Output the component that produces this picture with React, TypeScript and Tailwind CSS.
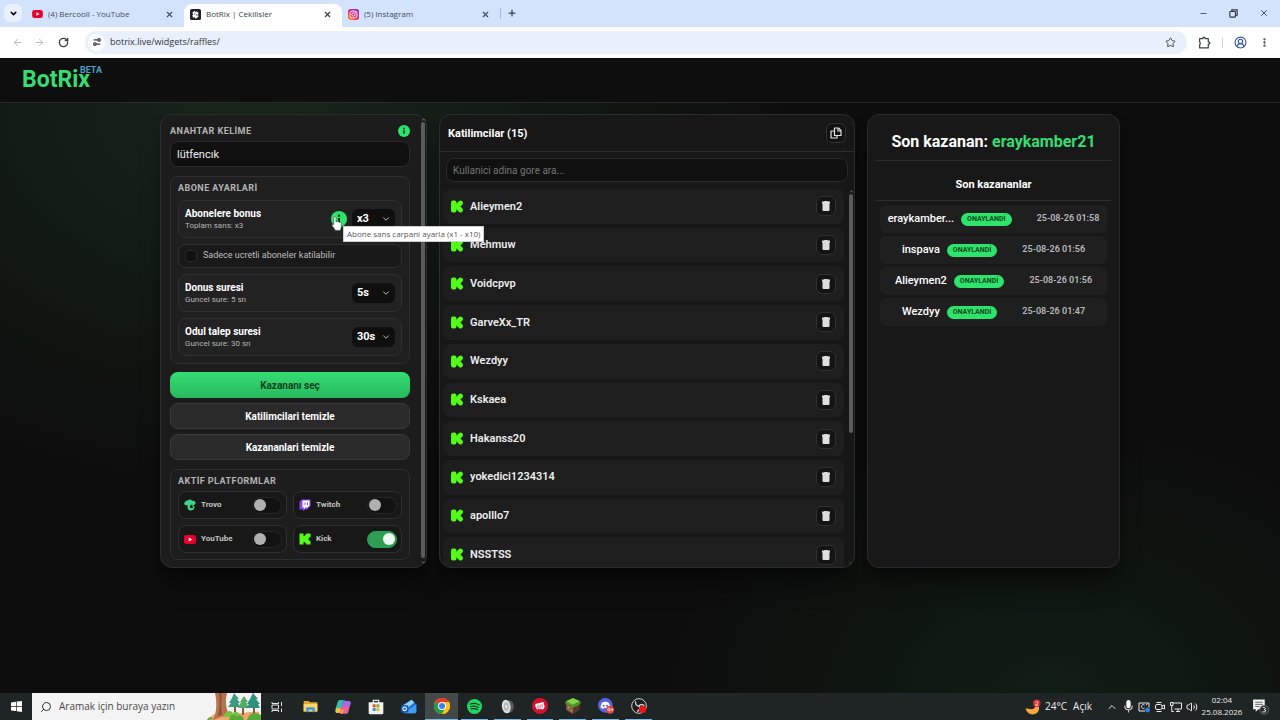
import { useState, type ReactNode } from "react";
import {
  ArrowLeft,
  ArrowRight,
  ChevronDown,
  ChevronUp,
  CircleUserRound,
  EllipsisVertical,
  Minus,
  Plus,
  RotateCw,
  Search,
  Settings2,
  Star,
  Volume2,
  X,
} from "lucide-react";

const participants = [
  "Alieymen2",
  "Mehmuw",
  "Voidcpvp",
  "GarveXx_TR",
  "Wezdyy",
  "Kskaea",
  "Hakanss20",
  "yokedici1234314",
  "apolllo7",
  "NSSTSS",
];

const winners = [
  { name: "eraykamber...", date: "25-08-26 01:58" },
  { name: "inspava", date: "25-08-26 01:56" },
  { name: "Alieymen2", date: "25-08-26 01:56" },
  { name: "Wezdyy", date: "25-08-26 01:47" },
];

/* ---------- icons ---------- */

function YoutubeIcon({ className }: { className?: string }) {
  return (
    <svg viewBox="0 0 24 18" className={className}>
      <rect width="24" height="18" rx="5" fill="#e8002d" />
      <path d="M9.500 5v8l7-4z" fill="#fff" />
    </svg>
  );
}

function BotrixIcon() {
  return (
    <svg viewBox="0 0 24 24" className="size-[11px]">
      <rect width="24" height="24" rx="4" fill="#20232b" />
      <path d="M5 8l5-4 2 3 3-2 4 5-2 2 2 4-6 5-3-3-3 1-2-5 2-2z" fill="#fff" />
      <path d="M9 9l3 1-1 3zM13 13l3-2v4z" fill="#20232b" />
    </svg>
  );
}

function InstagramIcon() {
  return (
    <svg viewBox="0 0 24 24" className="size-[11px]">
      <defs>
        <linearGradient id="ig" x1="0" y1="1" x2="0.8" y2="0">
          <stop offset="0" stopColor="#fdb813" />
          <stop offset="0.4" stopColor="#f5304f" />
          <stop offset="0.7" stopColor="#d6249f" />
          <stop offset="1" stopColor="#7a2be0" />
        </linearGradient>
      </defs>
      <rect width="24" height="24" rx="6" fill="url(#ig)" />
      <rect x="4.5" y="4.5" width="15" height="15" rx="4.5" fill="none" stroke="#fff" strokeWidth="2" />
      <circle cx="12" cy="12" r="3.5" fill="none" stroke="#fff" strokeWidth="2" />
      <circle cx="16.4" cy="7.6" r="1.1" fill="#fff" />
    </svg>
  );
}

function ExtensionIcon() {
  return (
    <svg viewBox="0 0 24 24" className="size-[13px]" fill="none" stroke="currentColor" strokeWidth="2.2">
      <path d="M3 5h6V4a2 2 0 0 1 4 0v1h6v6h1a2 2 0 0 1 0 4h-1v7H3v-6a3 3 0 0 0 0-5z" strokeLinejoin="round" />
    </svg>
  );
}

function CopyIcon() {
  return (
    <svg viewBox="0 0 24 24" className="size-3" fill="none" stroke="currentColor" strokeWidth="2.4">
      <path d="M9 2h8l5 5v10H9z" strokeLinejoin="round" />
      <path d="M16 2v6h6" />
      <path d="M9 8H2v14h12v-5" strokeLinejoin="round" />
    </svg>
  );
}

function KickBadge() {
  return (
    <svg viewBox="0 0 24 26" className="h-[13px] w-3 shrink-0">
      <rect x="0" y="1" width="11" height="24" rx="4" fill="#53fc18" />
      <path
        d="M19 6l-7 7 7 7"
        fill="none"
        stroke="#53fc18"
        strokeWidth="9.500"
        strokeLinecap="round"
        strokeLinejoin="round"
      />
    </svg>
  );
}

function KickIcon() {
  return (
    <svg viewBox="0 0 24 24" className="size-3">
      <path
        d="M1 1h8v5h3V3.500h2.500V1H23v7.500h-2.500V11H18v2h2.500v2.500H23V23h-8.500v-2.500H12V18H9v5H1z"
        fill="#53fc18"
      />
    </svg>
  );
}

function TrovoIcon() {
  return (
    <svg viewBox="0 0 24 24" className="size-3">
      <path
        d="M1 7c2-1 2-5 6-4 3-3 8-3 9 1 4-1 7 1 7 4s-2 4-5 4c-3-1-5 0-6 2-1 3 1 5 4 4 2 0 3-2 2-3h-2v-2c3-1 5 1 5 3 0 4-3 7-8 7-4 0-6-3-6-7v-4c-4 2-8-1-6-5z"
        fill="#3fd189"
      />
    </svg>
  );
}

function TwitchIcon() {
  return (
    <svg viewBox="0 0 24 24" className="size-3">
      <path d="M1 6l5-5h17v13l-7 7h-4l-4 3v-3H1z" fill="#8b44f0" />
      <path d="M7 3h14v10l-4 4h-4l-3 3v-3H7z" fill="#fff" />
      <path d="M12 7v5M17 7v5" stroke="#8b44f0" strokeWidth="2" />
    </svg>
  );
}

function TrashIcon() {
  return (
    <svg viewBox="0 0 16 20" className="h-[10px] w-2" fill="#dedede">
      <path d="M5 0h6l1 1h4v4h-1v13a2 2 0 0 1-2 2H3a2 2 0 0 1-2-2V5H0V1h4z" />
    </svg>
  );
}

function InfoIcon({ className }: { className?: string }) {
  return (
    <svg viewBox="0 0 24 24" className={className}>
      <circle cx="12" cy="12" r="12" fill="#2ee36c" />
      <path d="M12 10.500v7" stroke="#0d3a1c" strokeWidth="3" />
      <circle cx="12" cy="7" r="1.800" fill="#0d3a1c" />
    </svg>
  );
}

function HandCursor() {
  return (
    <svg viewBox="0 0 20 28" className="absolute top-[5px] left-0 z-20 h-[15px] w-[11px]">
      <path
        d="M5 3c0-3 4-3 4 0v8c1-2 3-1 3 0 1-1 3-1 3 1 2-1 4 0 4 2v5c0 3-1 5-2 8H8c-1-3-4-5-6-9-1-2 1-4 3-2z"
        fill="#fff"
        stroke="#333"
        strokeWidth="1"
      />
    </svg>
  );
}

/* ---------- browser ---------- */

type TabProps = { icon: ReactNode; title: string; active?: boolean };

function BrowserTab({ icon, title, active }: TabProps) {
  return (
    <div
      className={
        active
          ? "flex h-[23px] w-[158px] items-center rounded-t-lg bg-white pr-[10px] pb-[3px] pl-[6px] text-[#3a3d42]"
          : "flex h-[23px] w-[158px] items-center pr-[10px] pb-[3px] pl-[6px] text-[#454c57]"
      }
    >
      {icon}
      <span className="ml-[5px] flex-1 truncate text-[8px]">{title}</span>
      <button type="button" aria-label="Sekmeyi kapat">
        <X className="size-[9px]" strokeWidth={3} />
      </button>
    </div>
  );
}

function BrowserChrome() {
  return (
    <div className="font-['Open_Sans','Noto_Sans',sans-serif]">
      <div className="flex h-[27px] items-end bg-[#d3e3fb] pl-1">
        <button
          type="button"
          aria-label="Sekme ara"
          className="mr-1 mb-[5px] flex size-[18px] items-center justify-center rounded-md bg-[#e9f1fe]"
        >
          <ChevronDown className="size-[9px]" strokeWidth={4} />
        </button>
        <BrowserTab icon={<YoutubeIcon className="h-2 w-[11px]" />} title="(4) Bercooll - YouTube" />
        <BrowserTab icon={<BotrixIcon />} title="BotRix | Cekilisler" active />
        <BrowserTab icon={<InstagramIcon />} title="(5) Instagram" />
        <div className="mb-2 h-[11px] w-px bg-[#a5bbdc]" />
        <button type="button" aria-label="Yeni sekme" className="mb-[9px] ml-[6px] text-[#3c4350]">
          <Plus className="size-[10px]" strokeWidth={3} />
        </button>
        <div className="mb-[9px] ml-auto flex items-center gap-[21px] pr-[11px] text-[#30343b]">
          <Minus className="size-[9px]" />
          <svg viewBox="0 0 16 16" className="size-[9px]" fill="none" stroke="currentColor" strokeWidth="2">
            <rect x="1.500" y="4.500" width="10" height="10" rx="1" />
            <path d="M5 4V1.500h9.500V11H12" />
          </svg>
          <X className="size-[10px]" />
        </div>
      </div>
      <div className="flex h-[31px] items-center bg-white pr-[10px] pb-px pl-3 text-[#3c4043]">
        <ArrowLeft className="size-[11px] text-[#b4b6ba]" />
        <ArrowRight className="ml-[11px] size-[11px] text-[#b4b6ba]" />
        <RotateCw className="ml-[13px] size-[11px]" strokeWidth={3} />
        <div className="ml-4 flex h-[23px] flex-1 items-center rounded-full bg-[#e9f0fb] pr-[11px] pl-[3px]">
          <div className="flex size-[17px] items-center justify-center rounded-full bg-white">
            <Settings2 className="size-[10px] -scale-x-100" strokeWidth={3} />
          </div>
          <input
            type="text"
            aria-label="Adres"
            defaultValue="botrix.live/widgets/raffles/"
            className="ml-[5px] flex-1 bg-transparent text-[9px] text-[#2f3338] outline-none"
          />
          <Star className="size-[11px]" strokeWidth={2} />
        </div>
        <div className="ml-[11px]">
          <ExtensionIcon />
        </div>
        <div className="mx-[11px] h-[11px] w-px bg-[#ccd8ea]" />
        <CircleUserRound className="size-[13px] text-[#3453a8]" strokeWidth={2} />
        <EllipsisVertical className="ml-3 size-[11px]" strokeWidth={3} />
      </div>
    </div>
  );
}

/* ---------- left column ---------- */

function DarkSelect({ id, value }: { id: string; value: string }) {
  return (
    <div className="relative">
      <select
        id={id}
        defaultValue={value}
        className="block h-5 w-[43px] appearance-none rounded-md bg-[#0f0f0f] pl-[5px] text-[11px] font-bold text-white"
      >
        <option>{value}</option>
      </select>
      <ChevronDown
        className="pointer-events-none absolute top-[5px] right-1 size-[10px] text-[#dddddd]"
        strokeWidth={2}
      />
    </div>
  );
}

type SettingRowProps = { id: string; title: string; hint: string; value: string; children?: ReactNode };

function SettingRow({ id, title, hint, value, children }: SettingRowProps) {
  return (
    <div className="flex h-[38px] items-center rounded-lg border border-[#303030] bg-[#222222] px-[6px]">
      <label htmlFor={id} className="flex-1">
        <span className="block text-[10px] leading-[13px] font-bold text-white">{title}</span>
        <span className="block text-[8px] leading-3 text-[#b5b5b5]">{hint}</span>
      </label>
      {children}
      <DarkSelect id={id} value={value} />
    </div>
  );
}

function BonusInfo() {
  return (
    <div className="relative mr-[5px]">
      <InfoIcon className="size-4" />
      <HandCursor />
      <div
        role="tooltip"
        className="absolute top-[15px] left-3 z-10 border border-[#cfcfcf] bg-white px-[3px] font-['Open_Sans','Noto_Sans',sans-serif] text-[8px] leading-[14px] whitespace-nowrap text-[#575757]"
      >
        Abone sans carpani ayarla (x1 - x10)
      </div>
    </div>
  );
}

function PlatformToggle({ name, icon, on }: { name: string; icon: ReactNode; on?: boolean }) {
  const [checked, setChecked] = useState(!!on);
  return (
    <label className="relative flex h-7 items-center rounded-lg border border-[#303030] bg-[#181818] pr-1 pl-[5px]">
      {icon}
      <span className="ml-[5px] flex-1 text-[8px] font-bold text-[#c4c4c4]">{name}</span>
      <input type="checkbox" className="peer sr-only" checked={checked} onChange={() => setChecked(!checked)} />
      <span className="flex h-[17px] w-[30px] items-center rounded-full border border-[#272727] bg-[#121212] px-px peer-checked:justify-end peer-checked:border-[#2f9e55] peer-checked:bg-[#2f9e55]">
        <span className={checked ? "size-3 rounded-full bg-[#eafaf0]" : "size-3 rounded-full bg-[#b0b0b0]"} />
      </span>
    </label>
  );
}

function SectionLabel({ children }: { children: ReactNode }) {
  return <h2 className="text-[9px] leading-[11px] font-bold tracking-wider text-[#b4b4b4]">{children}</h2>;
}

function SettingsPanel() {
  return (
    <section className="flex rounded-xl border border-[#2b2f2c] bg-[#1c1c1c] pl-[9px] shadow-xl shadow-black/40">
      <div className="flex-1 pt-[9px] pb-[7px]">
        <div className="flex h-[14px] items-center justify-between">
          <label htmlFor="keyword" className="pt-px text-[9px] font-bold tracking-wider text-[#b4b4b4]">
            ANAHTAR KELİME
          </label>
          <InfoIcon className="size-3" />
        </div>
        <input
          id="keyword"
          type="text"
          defaultValue="lütfencık"
          className="mt-[3px] block h-[26px] w-full rounded-lg border border-[#2a2a2a] bg-[#101010] px-[6px] text-[11px] text-[#eeeeee]"
        />

        <div className="mt-[9px] rounded-lg border border-[#303030] bg-[#1f1f1f] px-[7px] pt-[6px] pb-[7px]">
          <SectionLabel>ABONE AYARLARİ</SectionLabel>
          <div className="mt-[6px] space-y-[6px]">
            <SettingRow id="bonus" title="Abonelere bonus" hint="Toplam sans: x3" value="x3">
              <BonusInfo />
            </SettingRow>
            <label className="flex h-6 items-center gap-[6px] rounded-lg border border-[#303030] bg-[#191919] px-[6px] text-[9px] text-[#bdbdbd]">
              <input
                type="checkbox"
                className="size-3 appearance-none rounded-sm border border-[#2a2a2a] bg-[#101010] checked:bg-[#2ee36c]"
              />
              Sadece ucretli aboneler katilabilir
            </label>
            <SettingRow id="spin" title="Donus suresi" hint="Guncel sure: 5 sn" value="5s" />
            <SettingRow id="claim" title="Odul talep suresi" hint="Guncel sure: 30 sn" value="30s" />
          </div>
        </div>

        <div className="mt-2 space-y-[5px] text-[10px] font-bold">
          <button
            type="button"
            className="block h-[26px] w-full rounded-lg bg-linear-to-b from-[#35dd75] to-[#27b95c] pt-px text-[#07411c]"
          >
            Kazananı seç
          </button>
          <button type="button" className="block h-[26px] w-full rounded-lg border border-[#3a3a3a] bg-[#2a2a2a] text-white">
            Katilimcilari temizle
          </button>
          <button type="button" className="block h-[26px] w-full rounded-lg border border-[#3a3a3a] bg-[#2a2a2a] text-white">
            Kazananlari temizle
          </button>
        </div>

        <div className="mt-[9px] rounded-lg border border-[#303030] bg-[#1d1d1d] px-[7px] pt-[6px] pb-[6px]">
          <SectionLabel>AKTİF PLATFORMLAR</SectionLabel>
          <div className="mt-1 grid grid-cols-2 gap-[6px]">
            <PlatformToggle name="Trovo" icon={<TrovoIcon />} />
            <PlatformToggle name="Twitch" icon={<TwitchIcon />} />
            <PlatformToggle name="YouTube" icon={<YoutubeIcon className="h-[9px] w-3" />} />
            <PlatformToggle name="Kick" icon={<KickIcon />} on />
          </div>
        </div>
      </div>
      <div className="ml-[10px] flex w-[6px] flex-col items-center">
        <ChevronUp className="mt-[2px] size-[5px] text-[#8a8a8a]" strokeWidth={4} />
        <div className="w-1 flex-1 rounded-full bg-[#5c5c5c]" />
        <ChevronDown className="my-[2px] size-[5px] text-[#8a8a8a]" strokeWidth={4} />
      </div>
    </section>
  );
}

/* ---------- middle column ---------- */

function ParticipantsPanel() {
  return (
    <section className="flex flex-col overflow-hidden rounded-xl border border-[#2b2f2c] bg-[#171717] shadow-xl shadow-black/40 contain-size">
      <div className="flex h-[37px] shrink-0 items-center justify-between border-b border-[#2b2f2c] px-2">
        <h2 className="pt-[2px] text-[11px] font-bold text-white">Katilimcilar (15)</h2>
        <button
          type="button"
          aria-label="Kopyala"
          className="flex size-5 items-center justify-center rounded-md border border-[#333333] bg-[#121212] text-[#e2e2e2]"
        >
          <CopyIcon />
        </button>
      </div>
      <div className="px-[6px] pt-[6px] pb-[7px]">
        <input
          type="text"
          aria-label="Katilimci ara"
          placeholder="Kullanici adina gore ara..."
          className="block h-6 w-full rounded-lg border border-[#2a2a2a] bg-[#101010] px-[6px] text-[10px] text-white placeholder:text-[#747474]"
        />
      </div>
      <div className="flex min-h-0 flex-1">
        <ul className="grid h-[383px] flex-1 auto-rows-fr gap-1 pl-[3px]">
          {participants.map((name) => (
            <li key={name} className="flex items-center rounded-lg bg-[#1e1e1e] px-2">
              <KickBadge />
              <span className="ml-[7px] flex-1 pt-px text-[11px] font-semibold text-[#ededed]">{name}</span>
              <button
                type="button"
                aria-label={`${name} sil`}
                className="flex size-5 items-center justify-center rounded-md border border-[#303030] bg-[#141414]"
              >
                <TrashIcon />
              </button>
            </li>
          ))}
        </ul>
        <div className="ml-1 flex w-[6px] flex-col items-center">
          <ChevronUp className="size-[5px] text-[#8a8a8a]" strokeWidth={4} />
          <div className="flex w-full flex-1 justify-center">
            <div className="h-[65%] w-1 rounded-full bg-[#5c5c5c]" />
          </div>
          <ChevronDown className="mb-px size-[5px] text-[#8a8a8a]" strokeWidth={4} />
        </div>
      </div>
    </section>
  );
}

/* ---------- right column ---------- */

function WinnersPanel() {
  return (
    <section className="rounded-xl border border-[#2b2b2b] bg-[#181818] px-2 shadow-xl shadow-black/40">
      <h2 className="border-b border-[#2e2e2e] pt-[17px] pb-2 text-center text-[16px] leading-5 font-bold text-white">
        Son kazanan: <span className="text-[#35dd75]">eraykamber21</span>
      </h2>
      <h3 className="border-b border-[#2e2e2e] pt-4 pb-[7px] text-center text-[11px] leading-4 font-bold text-white">
        Son kazananlar
      </h3>
      <ul className="mx-1 mt-1 space-y-[3px]">
        {winners.map((w) => (
          <li key={w.name} className="flex h-7 items-center justify-center rounded-md bg-[#1f1f1f]">
            <span className="text-[11px] font-medium text-white">{w.name}</span>
            <span className="ml-[7px] rounded-full bg-[#2ee36c] px-[6px] text-[7px] leading-[13px] font-bold text-[#0b4a20]">
              ONAYLANDİ
            </span>
            <span className="ml-[25px] text-[9px] font-semibold text-[#b8b8b8]">{w.date}</span>
          </li>
        ))}
      </ul>
    </section>
  );
}

/* ---------- taskbar ---------- */

function ForestArt() {
  return (
    <svg viewBox="0 0 54 27" className="h-[27px] w-[54px]">
      <path d="M0 27c8-8 16-9 24-7s20-2 28-1v8z" fill="#f0a76b" />
      <path d="M8 0h12c-2 8-1 16 2 21l-16 6c4-8 4-18 2-27z" fill="#b5744f" />
      <path d="M12 0h3c-1 9-1 16 0 22l-4 1c2-8 2-16 1-23z" fill="#8e5236" />
      <path d="M28 12v10M36 13v9M47 12v11" stroke="#8a5a35" strokeWidth="2" />
      <path d="M27 0l5 6h-2l3 4h-2l2 4H21l3-4h-2l3-5z" fill="#3b9b82" />
      <path d="M37 3l4 6h-2l3 6H31l3-6h-1z" fill="#55ab63" />
      <path d="M46 0l5 6h-2l4 5h-2l2 4H39l3-4h-2l3-5z" fill="#2f8f80" />
      <path d="M16 24c3-6 7-8 10-4 3-3 7 0 8 4z" fill="#7cc043" />
      <path d="M22 27c1-5 5-7 8-3 3-3 6-1 7 3zM0 27c1-3 4-4 6-1zM40 27c2-7 8-9 14-5v5z" fill="#58a83a" />
    </svg>
  );
}

function FolderIcon() {
  return (
    <svg viewBox="0 0 24 20" className="h-[13px] w-[15px]">
      <path d="M1 2a1 1 0 0 1 1-1h7l2 2h11a1 1 0 0 1 1 1v14H1z" fill="#e0a92e" />
      <path d="M1 6h22v12H1z" fill="#fcd667" />
      <path d="M5 19v-6a2 2 0 0 1 2-2h10a2 2 0 0 1 2 2v6h-4v-4H9v4z" fill="#3f9be0" />
    </svg>
  );
}

function CopilotIcon() {
  return (
    <svg viewBox="0 0 24 24" className="size-4">
      <path d="M7 2h7c2 0 3 1 3 3l-4 12c-1 3-2 4-4 4H4c-3 0-4-2-3-5L4 5c1-2 1-3 3-3z" fill="#2a8fe0" />
      <path d="M7 2h6c-2 1-2 3-3 6l-2 7H1l3-10c1-2 1-3 3-3z" fill="#34c3a0" />
      <path d="M1 14h8l-1 5c-1 1-2 2-4 2-3 0-4-2-3-5z" fill="#f2c53a" />
      <path d="M17 22h-7c-2 0-3-1-3-3l4-12c1-3 2-4 4-4h5c3 0 4 2 3 5l-3 11c-1 2-1 3-3 3z" fill="#e3629c" />
      <path d="M11 7c1-3 2-4 4-4h5c3 0 4 2 3 5l-1 3H10z" fill="#a46ae6" />
      <path d="M8 16h6c-1 3-2 5-4 6-2 0-3-1-3-3z" fill="#f59b3c" />
    </svg>
  );
}

function StoreIcon() {
  return (
    <svg viewBox="0 0 24 24" className="size-4">
      <path d="M8 6V2h8v4" fill="none" stroke="#e8e8e8" strokeWidth="2" />
      <path d="M1 5h22v16a2 2 0 0 1-2 2H3a2 2 0 0 1-2-2z" fill="#f2f2f2" />
      <path d="M7 8h4.500v4.500H7z" fill="#e5512f" />
      <path d="M12.500 8H17v4.500h-4.500z" fill="#7db32c" />
      <path d="M7 13.500h4.500V18H7z" fill="#1b9de2" />
      <path d="M12.500 13.500H17V18h-4.500z" fill="#f5b51d" />
    </svg>
  );
}

function OutlookIcon() {
  return (
    <svg viewBox="0 0 24 22" className="h-[15px] w-4">
      <path d="M3 8L16 1l7 7v11a2 2 0 0 1-2 2H5a2 2 0 0 1-2-2z" fill="#1e6fd0" />
      <path d="M4 9L16 1l4 4-11 9z" fill="#8fd3fb" />
      <path d="M6 19L23 8v11a2 2 0 0 1-2 2H7z" fill="#3fa0f0" />
      <rect y="9" width="11" height="11" rx="2" fill="#1259ad" />
      <circle cx="5.500" cy="14.500" r="2.700" fill="none" stroke="#fff" strokeWidth="1.600" />
    </svg>
  );
}

function ChromeIcon() {
  return (
    <svg viewBox="0 0 24 24" className="size-4">
      <circle cx="12" cy="12" r="12" fill="#fbc116" />
      <path d="M12 12L1.600 6A12 12 0 0 1 22.400 6z" fill="#e33b2e" />
      <path d="M12 12L1.600 6A12 12 0 0 0 12 24l5-9z" fill="#229a4c" />
      <path d="M12 12V6h10.400A12 12 0 0 1 12 24l5-9z" fill="#fbc116" />
      <circle cx="12" cy="12" r="6" fill="#fff" />
      <circle cx="12" cy="12" r="4.500" fill="#3b7ded" />
    </svg>
  );
}

function SpotifyIcon() {
  return (
    <svg viewBox="0 0 24 24" className="size-[15px]">
      <circle cx="12" cy="12" r="12" fill="#1ed760" />
      <path
        d="M5 8c5-1.500 10-1 14.500 1.500M6 12c4-1.200 8.500-.8 12 1.500M6.500 15.800c3.500-1 7-.6 10 1.200"
        fill="none"
        stroke="#12351f"
        strokeWidth="2"
        strokeLinecap="round"
      />
    </svg>
  );
}

function SpeakerIcon() {
  return (
    <svg viewBox="0 0 24 24" className="size-[15px]">
      <ellipse cx="15" cy="12" rx="7" ry="10" fill="#5a5a5a" />
      <ellipse cx="10" cy="12" rx="7" ry="11" fill="#dcdcdc" transform="rotate(-8 10 12)" />
      <ellipse cx="10" cy="12" rx="4" ry="7" fill="#b9b9b9" />
      <ellipse cx="10" cy="12" rx="1.500" ry="3" fill="#eeeeee" />
    </svg>
  );
}

function RiotIcon() {
  return (
    <svg viewBox="0 0 24 24" className="size-4">
      <circle cx="12" cy="12" r="12" fill="#d1132f" />
      <path d="M5 9l12-3 2 7-2 4h-3l-1-3v3h-3l-1-3v3H7l-1-4-1 1z" fill="#fff" />
      <path d="M9 10v5M12 10v5M15 9v5" stroke="#d1132f" />
    </svg>
  );
}

function MinecraftIcon() {
  return (
    <svg viewBox="0 0 24 24" className="size-4">
      <path d="M12 0l11 5-11 6L1 5z" fill="#7ed348" />
      <path d="M1 5l11 6v13L2 18z" fill="#8a5a3c" />
      <path d="M23 5l-11 6v13l10-6z" fill="#54382a" />
      <path d="M1 5l11 6v4l-3-1v-2l-3 1v-3l-5-1zM23 5l-11 6v4l4-3v2l3-3 4-2z" fill="#4d9a2c" />
      <path d="M4 13h3v3H4zM8 18h3v2H8z" fill="#c58a68" />
    </svg>
  );
}

function DiscordIcon() {
  return (
    <svg viewBox="0 0 24 24" className="size-4">
      <circle cx="11" cy="11" r="11" fill="#5562e8" />
      <path
        d="M6 7c3-2 7-2 10 0 2 3 2 5 2 8-1 1-3 1-4 1l-1-1H9l-1 1c-1 0-3 0-4-1 0-3 0-5 2-8z"
        fill="#fff"
      />
      <circle cx="8.500" cy="11.500" r="1.500" fill="#5562e8" />
      <circle cx="13.500" cy="11.500" r="1.500" fill="#5562e8" />
      <circle cx="18" cy="17.500" r="6" fill="#dc4747" />
      <circle cx="16" cy="17" r="1.500" fill="none" stroke="#fff" />
      <path d="M17.500 17v3M19 17.500h4M21 15.500v4" stroke="#fff" />
    </svg>
  );
}

function ObsIcon() {
  return (
    <svg viewBox="0 0 24 24" className="size-4">
      <circle cx="12" cy="12" r="11" fill="#1d1d1f" stroke="#d2d2d2" strokeWidth="1.500" />
      <path
        d="M12 12c-4 0-6-3-5-7M12 12c2-3 6-3 8 0M12 12c2 3 1 7-3 8"
        fill="none"
        stroke="#d2d2d2"
        strokeWidth="2"
      />
      <circle cx="17.500" cy="17" r="5.500" fill="#f01414" />
    </svg>
  );
}

function TaskViewIcon() {
  return (
    <svg viewBox="0 0 24 24" className="size-3" fill="none" stroke="#e4e4e4" strokeWidth="2">
      <path d="M2 2v3h13V2M2 22v-3h13v3M2 8h13v8H2zM21 2v8M21 15v7" />
    </svg>
  );
}

const apps = [
  { name: "Gorev gorunumu", icon: <TaskViewIcon />, open: false },
  { name: "Dosya Gezgini", icon: <FolderIcon />, open: false },
  { name: "Copilot", icon: <CopilotIcon />, open: false },
  { name: "Store", icon: <StoreIcon />, open: false },
  { name: "Outlook", icon: <OutlookIcon />, open: false },
  { name: "Chrome", icon: <ChromeIcon />, open: true, active: true },
  { name: "Spotify", icon: <SpotifyIcon />, open: true },
  { name: "Ses", icon: <SpeakerIcon />, open: true },
  { name: "Riot", icon: <RiotIcon />, open: true },
  { name: "Minecraft", icon: <MinecraftIcon />, open: true },
  { name: "Discord", icon: <DiscordIcon />, open: true },
  { name: "OBS", icon: <ObsIcon />, open: true },
];

function Tray() {
  return (
    <div className="ml-auto flex items-center text-[#ececec]">
      <svg viewBox="0 0 30 30" className="size-4">
        <path d="M17 5c6 5 2 14-5 14-4 0-7-1-11-1 2 7 7 11 13 11 9 0 14-8 12-15-1-4-4-8-9-9z" fill="#f6a63a" />
        <circle cx="22" cy="8" r="7" fill="#d92d2d" />
        <path d="M19.500 6.500c1-3 5-2 4.500.5-.3 1.500-3 3-4.500 4.500h5" fill="none" stroke="#fff" strokeWidth="1.600" />
      </svg>
      <span className="ml-1 text-[10px]">24°C</span>
      <span className="mr-3 ml-[6px] text-[10px]">Açık</span>
      <div className="grid grid-cols-[repeat(6,16px)] place-items-center">
        <ChevronUp className="size-3" />
        <svg viewBox="0 0 16 24" className="h-[13px] w-[9px]">
          <rect x="4" width="8" height="15" rx="4" fill="#fff" />
          <path d="M1 10c0 5 3 8 7 8s7-3 7-8M8 18v5" fill="none" stroke="#cfcfcf" strokeWidth="2" />
        </svg>
        <svg viewBox="0 0 24 24" className="size-3" fill="none" stroke="#ececec" strokeWidth="2">
          <path d="M14 20H2V4h20v9" />
          <path d="M13 8c-3-2-6 0-6 3s3 5 6 3M16 8l3-2" />
          <circle cx="19" cy="18" r="4" fill="#2f7fe0" stroke="#2f7fe0" />
        </svg>
        <svg viewBox="0 0 24 24" className="size-3" fill="none" stroke="#ececec" strokeWidth="2">
          <rect x="3" y="7" width="13" height="10" rx="3" />
          <path d="M16 10l5-2v8l-5-2M5 3h10M5 21h10" />
        </svg>
        <svg viewBox="0 0 24 24" className="size-3" fill="none" stroke="#ececec" strokeWidth="2">
          <path d="M6 4h17v12H9M12 21h8M16 16v5M1 3h5v6H1zM3.500 9v12h4" />
        </svg>
        <Volume2 className="size-3" />
      </div>
      <div className="w-[44px] pb-px text-center text-[8px] leading-3">
        <div>02:04</div>
        <div>25.08.2026</div>
      </div>
      <svg viewBox="0 0 32 32" className="mr-[11px] ml-2 size-[17px]">
        <path d="M2 3h22v18H12l-5 5v-5H2z" fill="#f2f2f2" />
        <path d="M6 8h14M6 12h14M6 16h8" stroke="#444444" strokeWidth="1.500" />
        <circle cx="23" cy="22" r="8.500" fill="#2b2f30" stroke="#9a9a9a" />
        <path d="M20 18c5-2 7 3 3 4 5 0 3 6-3 4" fill="none" stroke="#fff" strokeWidth="1.800" />
      </svg>
    </div>
  );
}

function Taskbar() {
  return (
    <footer className="flex h-[27px] bg-[#1f2424] font-['Open_Sans','Noto_Sans',sans-serif]">
      <button type="button" aria-label="Baslat" className="flex w-8 items-center justify-center">
        <svg viewBox="0 0 24 24" className="size-[11px]" fill="#fff">
          <path d="M0 3l11-1.500V11H0zM12.500 1.300L24 0v11H12.500zM0 12.500h11V22L0 20.500zM12.500 12.500H24V24l-11.500-1.500z" />
        </svg>
      </button>
      <div className="flex w-[229px] items-center bg-[#f3f3f3] pl-2">
        <Search className="size-3 -scale-x-100 text-[#333333]" strokeWidth={2} />
        <input
          type="text"
          aria-label="Arama"
          placeholder="Aramak için buraya yazın"
          className="ml-[7px] min-w-0 flex-1 bg-transparent text-[10px] outline-none placeholder:text-[#4a4a4a]"
        />
        <ForestArt />
      </div>
      <nav className="grid w-[394px] grid-cols-12">
        {apps.map((app) => (
          <button
            key={app.name}
            type="button"
            aria-label={app.name}
            className={
              app.active
                ? "flex items-center justify-center border-b border-[#76b9ed] bg-[#434849]"
                : app.open
                  ? "mx-[3px] flex items-center justify-center border-b border-[#76b9ed]"
                  : "flex items-center justify-center"
            }
          >
            {app.icon}
          </button>
        ))}
      </nav>
      <Tray />
    </footer>
  );
}

export default function App() {
  return (
    <div className="flex min-h-screen flex-col bg-[#0d0d0d] font-['Roboto',sans-serif]">
      <BrowserChrome />
      <header className="flex h-[45px] items-center border-b border-[#282828] bg-[#0e0e0e] px-[22px]">
        <a href="#" className="flex text-[23px] leading-7 font-bold text-[#35dd75]">
          BotRix
          <span className="-ml-[10px] text-[9px] leading-[9px] font-bold text-[#4a9fc4]">BETA</span>
        </a>
      </header>
      <main className="flex-1 bg-[radial-gradient(ellipse_42%_65%_at_20%_0%,#17261b,transparent),radial-gradient(ellipse_30%_45%_at_82%_100%,#101d14,transparent)] px-4 pt-[11px]">
        <div className="mx-auto grid max-w-[960px] grid-cols-[267px_minmax(0,1fr)_253px] gap-3">
          <SettingsPanel />
          <ParticipantsPanel />
          <WinnersPanel />
        </div>
      </main>
      <Taskbar />
    </div>
  );
}
